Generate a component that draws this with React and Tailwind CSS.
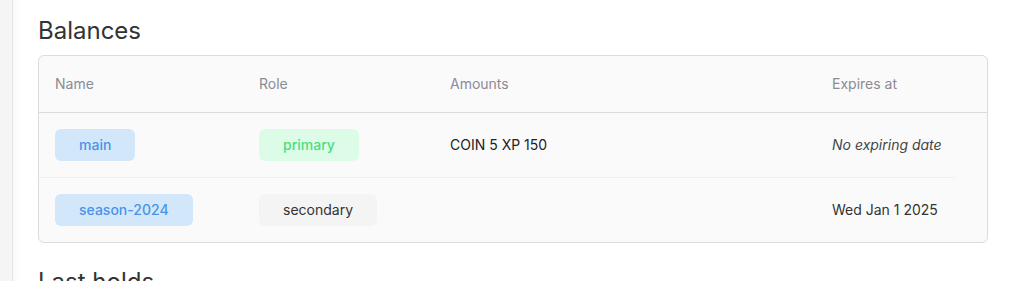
import React from 'react';

const rows = [
  {
    name: 'main',
    role: 'primary',
    amounts: 'COIN 5 XP 150',
    expires: null,
  },
  {
    name: 'season-2024',
    role: 'secondary',
    amounts: '',
    expires: 'Wed Jan 1 2025',
  },
];

const cols = 'grid grid-cols-[204px_191px_382px_139px_1fr] items-center';

const RoleBadge = ({ role }) =>
  role === 'primary' ? (
    <span className="inline-flex h-8 items-center rounded-md bg-[#dcfce7] px-6 font-medium text-[#4ade80]">
      {role}
    </span>
  ) : (
    <span className="inline-flex h-8 items-center rounded-md bg-[#f4f4f5] px-6 text-[#333]">
      {role}
    </span>
  );

const App = () => {
  return (
    <div className="flex min-h-[281px] bg-white font-['Inter',sans-serif] text-sm text-[#222]">
      <div className="w-[13px] shrink-0 border-r border-[#e6e6e6] bg-[#f5f5f5]" />
      <main className="flex-1 pl-[25px] pr-6 pt-[15px] shadow-[inset_10px_0_10px_-8px_rgba(0,0,0,0.04)]">
        <h2 className="mb-2 text-2xl leading-8 text-[#333]">Balances</h2>

        <div className="overflow-hidden rounded-md border border-[#dcdcdc] bg-[#fafafa]">
          <div className={`${cols} h-[57px] border-b border-[#dcdcdc] text-[#8b8b96]`}>
            <div className="pl-4">Name</div>
            <div className="pl-4">Role</div>
            <div className="pl-4">Amounts</div>
            <div className="pl-4">Expires at</div>
            <div />
          </div>

          {rows.map((r, i) => (
            <div key={r.name}>
              {i > 0 && <div className="mr-[32px] border-t border-[#efefef]" />}
              <div className={`${cols} h-16`}>
                <div className="pl-4">
                  <span className="inline-flex h-8 items-center rounded-md bg-[#d3e7fa] px-6 font-medium text-[#4a93e6]">
                    {r.name}
                  </span>
                </div>
                <div className="pl-4">
                  <RoleBadge role={r.role} />
                </div>
                <div className="pl-4">{r.amounts}</div>
                <div className="pl-4 whitespace-nowrap">
                  {r.expires ? (
                    <span className="text-[#333]">{r.expires}</span>
                  ) : (
                    <span className="italic text-[#444]">No expiring date</span>
                  )}
                </div>
                <div />
              </div>
            </div>
          ))}
        </div>

        <h2 className="mt-[23px] text-2xl leading-8 text-[#333]">Last holds</h2>
      </main>
    </div>
  );
};

export default App;
